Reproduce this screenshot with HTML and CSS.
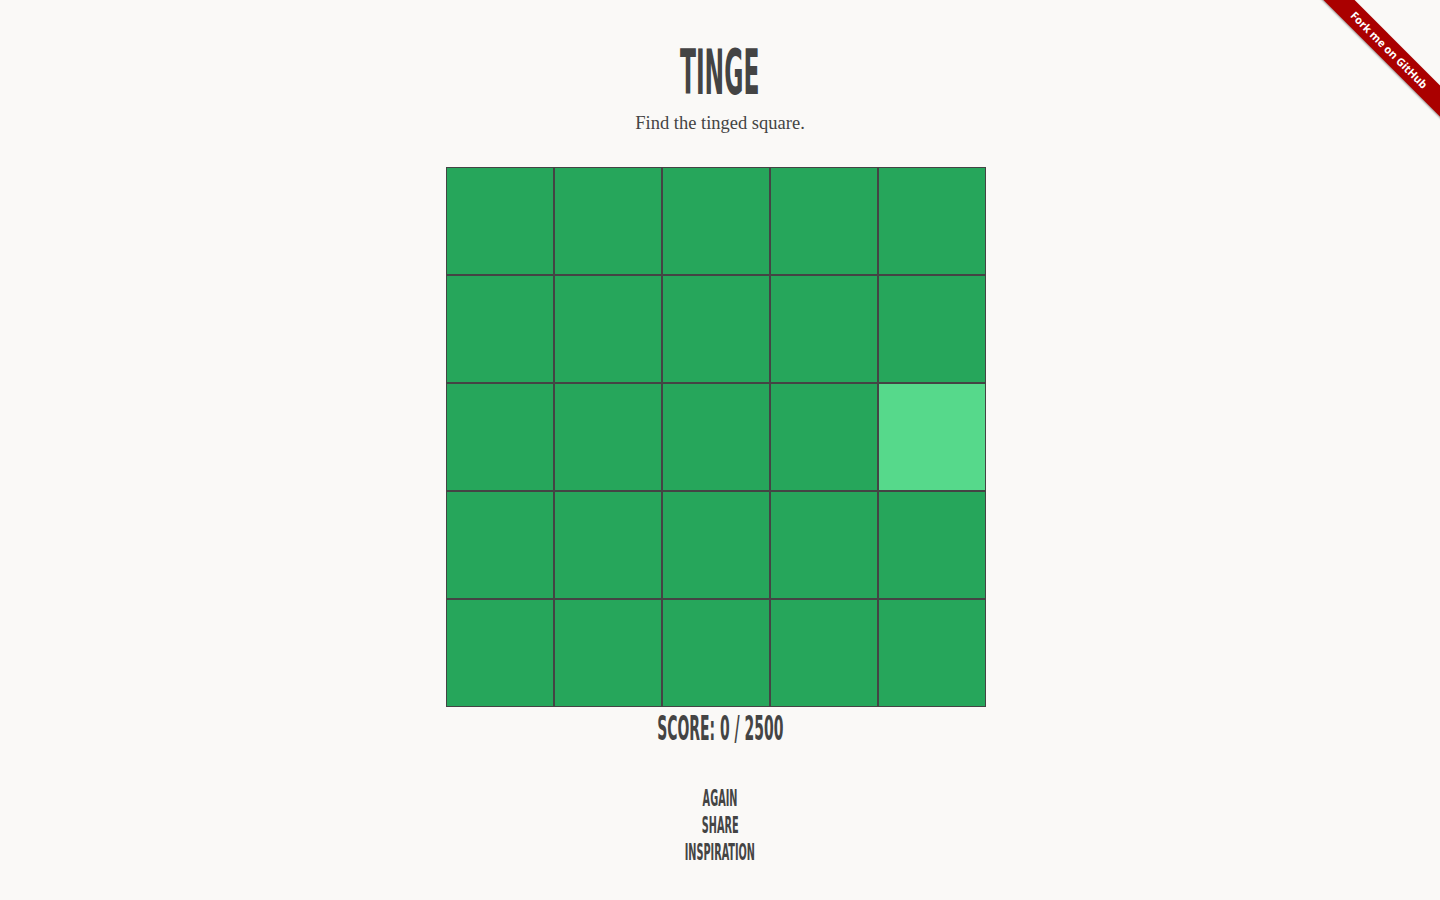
FILE: index.html
```html
<!DOCTYPE html>
<html lang="en">
<head>
    <meta charset="UTF-8">
    <meta name="viewport" content="width=device-width, initial-scale=1.0">
    <title>Tinge</title>
    <link rel="stylesheet" href="styles.css">
</head>
<body>
    <a class="ribbon" href="#">Fork me on GitHub</a>
    <header>
        <h1><span>TINGE</span></h1>
        <p class="tagline">Find the tinged square.</p>
    </header>
    <div class="board">
        <div class="cell"></div><div class="cell"></div><div class="cell"></div><div class="cell"></div><div class="cell"></div>
        <div class="cell"></div><div class="cell"></div><div class="cell"></div><div class="cell"></div><div class="cell"></div>
        <div class="cell"></div><div class="cell"></div><div class="cell"></div><div class="cell"></div><div class="cell tinged"></div>
        <div class="cell"></div><div class="cell"></div><div class="cell"></div><div class="cell"></div><div class="cell"></div>
        <div class="cell"></div><div class="cell"></div><div class="cell"></div><div class="cell"></div><div class="cell"></div>
    </div>
    <div class="score"><span>SCORE: 0 / 2500</span></div>
    <ul class="links">
        <li><a href="#">AGAIN</a></li>
        <li><a href="#">SHARE</a></li>
        <li><a href="#">INSPIRATION</a></li>
    </ul>
</body>
</html>
```

FILE: styles.css
```css
body {
    margin: 0;
    padding: 0;
    background: #faf9f7;
    color: #444;
    text-align: center;
    font-family: 'Liberation Serif', serif;
    overflow: hidden;
}
header {
    padding-top: 40px;
}
h1 {
    margin: 0;
    font-family: 'DejaVu Sans Condensed', 'DejaVu Sans', sans-serif;
    font-weight: bold;
    font-size: 62px;
    line-height: 66px;
    color: #444;
}
h1 span {
    display: inline-block;
    transform: scaleX(0.42);
}
.tagline {
    margin: 6px 0 0;
    font-size: 18.5px;
    line-height: 22px;
}
.board {
    width: 540px;
    padding-right: 8px;
    margin: 33px auto 0;
    display: grid;
    grid-template-columns: repeat(5, 108px);
}
.cell {
    height: 106px;
    border: 1px solid #444;
    background: #26a65b;
}
.cell.tinged {
    background: #56d98b;
}
.score {
    font-family: 'DejaVu Sans Condensed', 'DejaVu Sans', sans-serif;
    font-weight: bold;
    font-size: 33px;
    line-height: 40px;
    margin-top: 2px;
}
.score span {
    display: inline-block;
    transform: scaleX(0.47);
}
.links {
    list-style: none;
    margin: 36px 0 0;
    padding: 0;
    font-family: 'DejaVu Sans Condensed', 'DejaVu Sans', sans-serif;
    font-weight: bold;
    font-size: 23px;
    line-height: 27px;
}
.links a {
    display: inline-block;
    color: #444;
    text-decoration: none;
    transform: scaleX(0.47);
}
.ribbon {
    position: absolute;
    top: 39px;
    right: -49px;
    width: 200px;
    height: 22px;
    line-height: 22px;
    background: #a00;
    color: white;
    font-family: 'Open Sans', sans-serif;
    font-weight: bold;
    font-size: 11px;
    text-decoration: none;
    transform: rotate(45deg);
    box-shadow: 0 1px 2px rgba(0, 0, 0, 0.4);
}
```
